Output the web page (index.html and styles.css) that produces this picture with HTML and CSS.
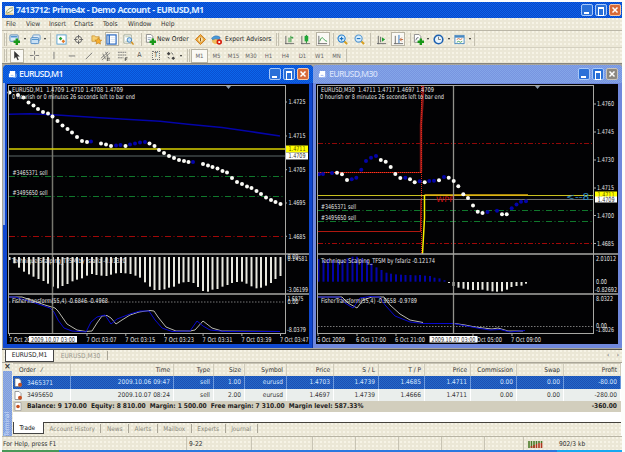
FILE: index.html
```html
<!DOCTYPE html>
<html lang="en">
<head>
<meta charset="utf-8">
<title>7413712: Prime4x - Demo Account - EURUSD,M1</title>
<link rel="stylesheet" href="styles.css">
</head>
<body>
<div class="app">
  <header class="titlebar">
    <svg class="logo" viewBox="0 0 10 10"><rect width="10" height="10" rx="1" fill="#f4f2e4"/><path d="M1 8Q3 2 9 2M2 8Q6 7 9 4" fill="none" stroke="#8a9a60"/><path d="M1 9h8" stroke="#d8a030"/></svg>
    <span class="title">7413712: Prime4x - Demo Account - EURUSD,M1</span>
    <div class="winbtns"><i class="wb min"></i><i class="wb max"></i><i class="wb close"><svg viewBox="0 0 12 12"><path d="M3 3l6 6M9 3l-6 6"/></svg></i></div>
  </header>
  <nav class="menu"><span>File</span><span>View</span><span>Insert</span><span>Charts</span><span>Tools</span><span>Window</span><span>Help</span></nav>

  <div class="toolbar tb1">
    <i class="grip"></i>
    <svg class="ic" viewBox="0 0 12 12"><rect x="1" y="1" width="9" height="7" rx="1" fill="#dceaf6" stroke="#5a8ab8"/><path d="M2 3h7" stroke="#4a90d0" stroke-width="1.5"/><path d="M8.5 5v7M5 8.5h7" stroke="#189818" stroke-width="2.6"/></svg>
    <i class="caret"></i>
    <svg class="ic" viewBox="0 0 12 12"><rect x="3" y="1" width="8" height="6" rx="1" fill="#e4eef8" stroke="#6a9ac8"/><rect x="1" y="4" width="8.500" height="6.500" rx="1" fill="#c8e0f4" stroke="#4a86c0"/><path d="M2 6h7" stroke="#4a90d0"/></svg>
    <i class="caret"></i>
    <i class="sep"></i>
    <svg class="ic" viewBox="0 0 12 12"><rect x="1" y="1" width="10" height="10" fill="#fff" stroke="#58a0d0"/><path d="M3 5l2-2 2 2-2 2z" fill="#28a030"/><path d="M6 8l2-2 2 2-2 2z" fill="#e07828"/></svg>
    <svg class="ic" viewBox="0 0 12 12"><circle cx="6" cy="6" r="3.500" fill="none" stroke="#666"/><path d="M6 1v4M6 7v4M1 6h4M7 6h4" stroke="#666"/></svg>
    <svg class="ic" viewBox="0 0 12 12"><path d="M1 2h3l1 1h4v5H1z" fill="#f8d070" stroke="#c89030" stroke-width=".8"/><path d="M8 4l1.200 2.400 2.600.3-1.900 1.800.5 2.600L8 9.800 5.600 11.100l.5-2.600-1.900-1.800 2.600-.3z" fill="#f8b030" stroke="#b87818" stroke-width=".6"/></svg>
    <span class="pressed"><svg class="ic" viewBox="0 0 12 12"><rect x="1" y="1" width="10" height="10" fill="#fff" stroke="#2868c0" stroke-width="1.300"/><path d="M3.500 1v10" stroke="#2868c0" stroke-width="1.500"/><path d="M5 4h5M5 6h5M5 8h5" stroke="#c8d8ec" stroke-width=".7"/></svg></span>
    <svg class="ic" viewBox="0 0 12 12"><path d="M1 1h8v9H1z" fill="#fff" stroke="#a0a898"/><path d="M2.500 3h5M2.500 8h3" stroke="#b8c8a8"/><circle cx="7" cy="6.500" r="2.500" fill="#c8e4f8" stroke="#3c80c0"/><path d="M9 8.500l2.500 3" stroke="#d09020" stroke-width="1.600"/></svg>
    <i class="sep"></i>
    <svg class="ic" viewBox="0 0 12 12"><path d="M1.500.5h5l2 2V9h-7z" fill="#fff" stroke="#888"/><path d="M3 4h4M3 6h3" stroke="#9ab"/><path d="M8.500 5v7M5 8.500h7" stroke="#189818" stroke-width="2.600"/></svg>
    <span class="lbl order">New Order</span>
    <svg class="ic" viewBox="0 0 12 12"><path d="M6 .5L11.500 6 6 11.500.5 6z" fill="#f8b040" stroke="#c87818"/><circle cx="6" cy="6" r="3" fill="#fce8b0" stroke="#c88020" stroke-width=".6"/><path d="M6 4v4" stroke="#885010"/></svg>
    <svg class="ic" viewBox="0 0 12 12"><ellipse cx="5.500" cy="7" rx="4.500" ry="3.800" fill="#f0c060"/><path d="M.5 4.500Q5 0 10 3.500L9 6.500Q5 4 2 6.500z" fill="#4898d8" stroke="#2868a8" stroke-width=".5"/><circle cx="9" cy="8.800" r="3" fill="#d82010"/><rect x="8" y="7.800" width="2" height="2" fill="#fff"/></svg>
    <span class="lbl expert">Expert Advisors</span>
    <i class="grip"></i>
    <svg class="ic" viewBox="0 0 12 12"><path d="M2 2v9M1 10.500h10" stroke="#666"/><path d="M5.500 4v5M7.500 2v7M7.500 4h2M9.500 3v2" stroke="#289838"/></svg>
    <svg class="ic" viewBox="0 0 12 12"><path d="M2 2v9M1 10.500h10" stroke="#666"/><path d="M7 1v9" stroke="#188828"/><rect x="5" y="2" width="4" height="6" fill="#20a838"/></svg>
    <span class="pressed"><svg class="ic" viewBox="0 0 12 12"><path d="M2 2v9M1 10.500h10" stroke="#666"/><path d="M3 8Q5 2 7 5t4 3" fill="none" stroke="#38a048"/></svg></span>
    <i class="sep"></i>
    <svg class="ic" viewBox="0 0 12 12"><path d="M7.500 7.500l3.500 3.500" stroke="#d8a020" stroke-width="2.200"/><circle cx="5" cy="5" r="3.900" fill="#d8eefc" stroke="#2880d0" stroke-width="1.200"/><path d="M3 5h4M5 3v4" stroke="#1870c0" stroke-width="1.200"/></svg>
    <svg class="ic" viewBox="0 0 12 12"><path d="M7.500 7.500l3.500 3.500" stroke="#d8a020" stroke-width="2.200"/><circle cx="5" cy="5" r="3.900" fill="#d8eefc" stroke="#5898d0" stroke-width="1.200"/><path d="M3 5h4" stroke="#1870c0" stroke-width="1.200"/></svg>
    <i class="sep"></i>
    <svg class="ic" viewBox="0 0 12 12"><path d="M2.500 2v9M1 10.500h10M5 3v6" stroke="#666"/><path d="M6.500 3.500L10 6 6.500 8.500z" fill="#20a030"/></svg>
    <span class="pressed"><svg class="ic" viewBox="0 0 12 12"><path d="M2.500 2v9M1 10.500h10" stroke="#666"/><path d="M6.500 1v9" stroke="#2870c0"/><path d="M11 6H8M9.500 4L7.500 6l2 2" fill="none" stroke="#c06030"/></svg></span>
    <i class="sep"></i>
    <svg class="ic" viewBox="0 0 12 12"><path d="M1.500.5h5l2 2V9h-7z" fill="#fff" stroke="#888"/><path d="M3 7q1-4 3-3" fill="none" stroke="#667"/><path d="M8.500 5v7M5 8.500h7" stroke="#189818" stroke-width="2.600"/></svg>
    <i class="caret"></i>
    <svg class="ic" viewBox="0 0 12 12"><circle cx="6" cy="6" r="4.700" fill="#e8f4fc" stroke="#1c60b0" stroke-width="1.700"/><path d="M6 3v3h2.500" fill="none" stroke="#555" stroke-width=".8"/></svg>
    <i class="caret"></i>
    <svg class="ic" viewBox="0 0 12 12"><rect x="1" y="1.500" width="10" height="9" fill="#fff" stroke="#4888c0"/><path d="M1 3h10" stroke="#4888c0" stroke-width="2"/><path d="M3 6l2-1 2 1 2-1" fill="none" stroke="#d07040"/><path d="M3 9l2-1 2 1 2-1" fill="none" stroke="#40a050"/></svg>
    <i class="caret"></i>
    <i class="sep"></i>
  </div>

  <div class="toolbar tb2">
    <i class="grip"></i>
    <span class="pressed"><svg class="ic" viewBox="0 0 12 12"><path d="M3.500 1v8.500l2-2 1.700 3.700 1.300-.6-1.600-3.600h2.800z" fill="#333"/></svg></span>
    <svg class="ic" viewBox="0 0 12 12"><path d="M6 1v4M6 7v4M1 6h4M7 6h4" stroke="#777"/></svg>
    <svg class="ic" viewBox="0 0 12 12"><path d="M6.500 2v8" stroke="#777"/></svg>
    <svg class="ic" viewBox="0 0 12 12"><path d="M3 6.500h7" stroke="#777"/></svg>
    <svg class="ic" viewBox="0 0 12 12"><path d="M3 10l7-7" stroke="#777"/></svg>
    <svg class="ic" viewBox="0 0 12 12"><path d="M1 9l8-7M2 11l9-8M3 4l3 6M6 2l3 6" stroke="#666" stroke-width=".8"/><path d="M8 9h3M8 11h3M8 8v4" stroke="#333" stroke-width=".7"/></svg>
    <svg class="ic" viewBox="0 0 12 12"><path d="M1 2.500h9M1 5.500h9M1 8.500h6" stroke="#777" stroke-dasharray="2 .5"/><path d="M9 12V8.500h2.500M9 10h2" fill="none" stroke="#333" stroke-width=".8"/></svg>
    <span class="glyph">A</span>
    <span class="glyph boxed">T</span>
    <svg class="ic" viewBox="0 0 12 12"><path d="M2 4l2-2 2 2-2 2zM7 9l2-2 2 2-2 2z" fill="#444"/><path d="M7 3l2 2M3 8l2 1" stroke="#444"/></svg>
    <i class="caret"></i>
    <i class="grip"></i>
    <span class="pressed tf">M1</span><span class="tf">M5</span><span class="tf">M15</span><span class="tf">M30</span><span class="tf">H1</span><span class="tf">H4</span><span class="tf">D1</span><span class="tf">W1</span><span class="tf">MN</span>
    <i class="sep"></i>
  </div>

  <main class="mdi">
    <section class="win active">
      <div class="wtitle"><svg class="wlogo" viewBox="0 0 10 10"><path d="M2 1h6v3H2zM1 4h7v4H1z" fill="#fff"/><path d="M3 6h3M6 8h3V4" fill="none" stroke="#9cc4f4"/></svg><span>EURUSD,M1</span>
        <div class="winbtns"><i class="wb min"></i><i class="wb max"></i><i class="wb close"><svg viewBox="0 0 12 12"><path d="M3 3l6 6M9 3l-6 6"/></svg></i></div></div>
      <svg class="chart" id="m1" viewBox="7 84 302 260"></svg>
    </section>
    <section class="win idle">
      <div class="wtitle"><svg class="wlogo" viewBox="0 0 10 10"><path d="M2 1h6v3H2zM1 4h7v4H1z" fill="#fff"/><path d="M3 6h3M6 8h3V4" fill="none" stroke="#9cb4f0"/></svg><span>EURUSD,M30</span>
        <div class="winbtns"><i class="wb min"></i><i class="wb max"></i><i class="wb close"><svg viewBox="0 0 12 12"><path d="M3 3l6 6M9 3l-6 6"/></svg></i></div></div>
      <svg class="chart" id="m30" viewBox="316 84 302 260"></svg>
    </section>
  </main>

  <div class="charttabs"><span class="on">EURUSD,M1</span><span class="off">EURUSD,M30</span><span class="arrows"><b>‹</b><b>›</b></span></div>

  <section class="terminal">
    <aside><b>×</b><div><span>Terminal</span></div></aside>
    <div class="panel">
      <div class="row head"><span class="l">Order &nbsp; ⁄</span><span>Time</span><span>Type</span><span>Size</span><span>Symbol</span><span>Price</span><span>S / L</span><span>T / P</span><span>Price</span><span>Commission</span><span>Swap</span><span>Profit</span></div>
      <div class="row sel"><span class="l"><svg viewBox="0 0 8 9"><path d="M1 .5h4l2 2v6H1z" fill="#fff" stroke="#777" stroke-width=".7"/><circle cx="6" cy="6.800" r="2" fill="#c85020"/></svg>3465371</span><span>2009.10.06 09:47</span><span>sell</span><span>1.00</span><span>eurusd</span><span>1.4703</span><span>1.4739</span><span>1.4685</span><span>1.4711</span><span>0.00</span><span>0.00</span><span>-80.00</span></div>
      <div class="row alt"><span class="l"><svg viewBox="0 0 8 9"><path d="M1 .5h4l2 2v6H1z" fill="#fff" stroke="#777" stroke-width=".7"/><circle cx="6" cy="6.800" r="2" fill="#c85020"/></svg>3495650</span><span>2009.10.07 08:24</span><span>sell</span><span>2.00</span><span>eurusd</span><span>1.4697</span><span>1.4739</span><span>1.4666</span><span>1.4711</span><span>0.00</span><span>0.00</span><span>-280.00</span></div>
      <div class="balance"><svg viewBox="0 0 8 9"><path d="M1 .5h6v8H1z" fill="#fff" stroke="#999" stroke-width=".7"/><circle cx="4" cy="4.500" r="1.800" fill="#c85020"/></svg><span>Balance: 9 170.00&nbsp; Equity: 8 810.00&nbsp; Margin: 1 500.00&nbsp; Free margin: 7 310.00&nbsp; Margin level: 587.33%</span><span class="total">-360.00</span></div>
      <div class="blank"></div>
      <div class="tabs"><span class="on">Trade</span><span>Account History</span><span>News</span><span>Alerts</span><span>Mailbox</span><span>Experts</span><span>Journal</span></div>
    </div>
  </section>

  <footer class="status"><span>For Help, press F1</span><span>9-22</span><span></span><span></span><span></span><span></span><span></span><span></span><span class="net"><svg viewBox="0 0 15 7"><path d="M1 0v7M3.500 0v7M6 0v7M8.500 0v3M11 0v2M13.500 0v2" stroke="#4a7a28" stroke-width="1.600"/><path d="M3.500 5v2M6 4v3M8.500 3v4M11 2v5M13.500 2v5" stroke="#b03820" stroke-width="1.600"/></svg>902/3 kb</span></footer>
  <div class="taskbar"><i></i><b></b></div>
</div>
<script src="charts.js"></script>
</body>
</html>
```
FILE: styles.css
```css
* { box-sizing: border-box; }
body { margin: 0; width: 625px; height: 452px; background: #fdfdfb; overflow: hidden; font: 6.6px/1 "DejaVu Sans Condensed", "DejaVu Sans", sans-serif; color: #333; }
.app { margin: 0 3px 0 2px; padding-top: 2px; height: 452px; display: flex; flex-direction: column; }
.app > * { flex: none; }
i, b { font-style: normal; }
svg { display: block; }

.titlebar { height: 16px; display: flex; align-items: center; padding: 0 1px 0 3px; background: conic-gradient(#0a48c8 25%, #0c62ea 0 50%, #0a48c8 0 75%, #0c62ea 0) 0 0/2px 2px; }
.logo { width: 9px; height: 9px; }
.title { margin-left: 2px; font: bold 9px/16px "Open Sans", sans-serif; color: #dcecff; white-space: nowrap; width: 190px; letter-spacing: -.6px; word-spacing: .4px; }
.winbtns { margin-left: auto; display: flex; gap: 2px; }
.wb { width: 12px; height: 12px; border: 1px solid #a8c8f8; border-radius: 2px; background: #2a70d8; display: flex; }
.wb.min::after { content: ""; width: 5px; height: 2px; margin: 7px 0 0 2px; background: #fff; }
.wb.max::after { content: ""; width: 6px; height: 6px; margin: 2px; border: 1px solid #fff; border-top-width: 2px; }
.wb.close { background: #d86a38; border-color: #f4c8a8; }
.wb svg { width: 10px; height: 10px; stroke: #fff; stroke-width: 1.8; fill: none; }

.menu, .toolbar, .charttabs, .panel .head, .tabs, .status, aside { background-color: #ebe7d6; background-image: conic-gradient(#f6f3e6 25%, transparent 0); background-size: 4px 4px; }
.menu { height: 13px; padding: 1px 0 0 4px; display: grid; grid-template-columns: 20px 23px 25px 29px 25px 33px 20px; align-items: center; border-bottom: 1px solid #bbb7a8; }
.toolbar { display: grid; align-items: center; justify-items: center; }
.tb1 { height: 17px; grid-template-columns: 6px 13px 7px 14px 5px 7px 14px 20px 16px 15px 19px 6px 12px 36px 16px 17px 49px 7px 16px 17px 17px 4px 15px 18px 5px 16px 18px 6px 11px 7px 14px 7px 15px 5px 4px; border-bottom: 1px solid #d4d0c0; }
.tb2 { height: 16px; grid-template-columns: 7px 15px 20px 18px 18px 17px 17px 17px 17px 16px 13px 8px 6px 17px 17px 17px 18px 17px 17px 17px 17px 17px 2px; border-bottom: 1px solid #88867e; }
.ic { width: 11px; height: 11px; }
.caret { border: 1.5px solid transparent; border-top: 2px solid #222; border-bottom: 0; }
.grip { width: 3px; height: 13px; border-left: 1px solid #c4c0b0; border-right: 1px solid #c4c0b0; }
.sep { width: 1px; height: 13px; background: #c4c0b0; }
.pressed { width: 14px; height: 14px; display: flex; align-items: center; justify-content: center; background: #faf9f4; border: 1px solid #b8b4a4; }
.tf { font-size: 6px; color: #666; }
.pressed.tf { width: 17px; }
.lbl { white-space: nowrap; justify-self: start; color: #222; }
.order { margin-left: 1px; }
.glyph { font-size: 7px; color: #555; }
.boxed { border: 1px dotted #777; padding: 0 1px; }

.mdi { height: 285px; padding: 1px 0 1px 1px; display: flex; background: #a8a69c; }
.win { width: 310px; height: 283px; padding: 0 4px 4px; border-radius: 4px 4px 0 0; }
.win.active { background: linear-gradient(#9cb4e4, #9cb4e4) 0 0/2px 160px no-repeat #1048d0; box-shadow: inset -1px 0 #0830a0; }
.win.idle { width: 309px; padding-left: 3px; background: #7088dc; }
.wtitle { height: 18px; display: flex; align-items: center; margin: 0 -4px 1px; padding: 0 4px 0 5px; border-radius: 4px 4px 0 0; }
.active .wtitle { background: conic-gradient(#0a50d0 25%, #0c66ec 0 50%, #0a50d0 0 75%, #0c66ec 0) 0 0/2px 2px; color: #e8f2ff; }
.idle .wtitle { background: conic-gradient(#7894e0 25%, #84a6e8 0 50%, #7894e0 0 75%, #84a6e8 0) 0 0/2px 2px; color: #d0ddf8; margin-left: -3px; }
.wtitle span { margin-left: 2px; font: 600 8.8px/18px "Open Sans", sans-serif; letter-spacing: -.75px; }
.wlogo { width: 9px; height: 9px; }
.idle .wb.close { background: #8c8880; border-color: #c8c4bc; }
.chart { width: 302px; height: 260px; background: #020204; font: 6.6px "DejaVu Sans Condensed", sans-serif; }

.charttabs { height: 13px; border-top: 1px solid #55534c; display: flex; line-height: 11px; }
.charttabs .on { width: 49px; margin-left: 3px; height: 12px; background: #fff; border: 1px solid #444; border-top: 0; text-align: center; font-size: 6.6px; color: #222; }
.charttabs .off { width: 54px; color: #99978c; text-align: center; font-size: 6.6px; border-right: 1px solid #aaa698; height: 9px; margin-top: 1px; line-height: 10px; }
.arrows { margin-left: auto; display: flex; gap: 7px; padding-right: 3px; color: #888; font-weight: 400; }

.terminal { display: flex; height: 74px; border-top: 1px solid #aaa698; }
aside { width: 11px; padding: 0 1px; display: flex; flex-direction: column; }
aside b { height: 8px; font-size: 9px; line-height: 7px; text-align: center; }
aside div { flex: 1; background: conic-gradient(#7e9cdc 25%, #92aee4 0 50%, #7e9cdc 0 75%, #92aee4 0) 0 0/2px 2px; display: flex; align-items: flex-end; justify-content: center; }
aside div span { writing-mode: vertical-rl; transform: rotate(180deg); color: #d4e0fa; font-size: 6.4px; }
.panel { width: 608px; background: #fff; }
.row { display: grid; grid-template-columns: 58px 103px 40px 31px 42px 47px 45px 46px 46px 46px 47px 57px; height: 12px; text-align: right; white-space: nowrap; font-size: 6.5px; }
.row span { line-height: 12px; padding-right: 3px; }
.row .l { text-align: left; display: flex; align-items: center; gap: 5px; padding-left: 1px; }
.row svg, .balance svg { width: 8px; height: 9px; flex: none; }
.head { height: 13px; border-top: 1px solid #c8c4b4; }
.head .l { padding-left: 6px; }
.head span, .sel span { border-right: 1px solid #d0ccbc; }
.sel { height: 13px; color: #d4e6ff; background: conic-gradient(#1c50b4 25%, #2668c8 0 50%, #1c50b4 0 75%, #2668c8 0) 0 0/2px 2px; }
.sel span { border-color: #6c98dc; }
.alt { height: 12px; background: #eaeeec; }
.alt span { border-right: 1px solid #fff; }
.balance { height: 11px; display: flex; align-items: center; padding: 0 4px 0 1px; background: #d2cebd; font-weight: bold; font-size: 6.6px; color: #222; gap: 5px; white-space: nowrap; }
.total { margin-left: auto; }
.blank { height: 11px; border-bottom: 1px solid #44423c; }
.tabs { height: 14px; display: flex; color: #8a887c; line-height: 12px; font-size: 6.4px; }
.tabs span { height: 9px; line-height: 10px; margin-top: 1px; padding: 0 5.5px; border-right: 1px solid #aaa698; white-space: nowrap; }
.tabs .on { height: 12px; width: 31px; margin: -1px 0 0; background: #fff; color: #222; border: 1px solid #444; border-top: 0; line-height: 12px; }

.status { height: 14px; border-top: 1px solid #b8b4a4; display: grid; grid-template-columns: 185px 65px 61px 43px 43px 43px 43px 39px 1fr; line-height: 14px; }
.status span { padding-left: 2px; border-right: 1px solid #c8c4b4; white-space: nowrap; }
.status span:first-child { padding-left: 1px; }
.status .net { display: flex; gap: 16px; align-items: center; border: 0; padding-left: 4px; }
.net svg { width: 15px; height: 7px; }
.taskbar { height: 3px; background: #2a78e0; display: flex; }
.taskbar i { width: 57px; background: #489858; }
.taskbar b { margin-left: auto; width: 65px; background: #18a8f0; }
```
FILE: charts.js
```js
const NS = 'http://www.w3.org/2000/svg';

function painter(svg) {
  const add = (tag, attrs, text) => {
    const el = document.createElementNS(NS, tag);
    for (const k in attrs) el.setAttribute(k, attrs[k]);
    if (text) el.textContent = text;
    svg.appendChild(el);
  };
  return {
    add,
    h: (x1, x2, y, stroke, w = 1, dash = '') => add('path', { d: `M${x1} ${y}H${x2}`, stroke, 'stroke-width': w, 'stroke-dasharray': dash }),
    v: (x, y1, y2, stroke, w = 1, dash = '') => add('path', { d: `M${x} ${y1}V${y2}`, stroke, 'stroke-width': w, 'stroke-dasharray': dash }),
    line: (points, stroke, w = 1, dash = '') => add('polyline', { points, fill: 'none', stroke, 'stroke-width': w, 'stroke-dasharray': dash }),
    box: (x, y, width, height, fill) => add('rect', { x, y, width, height, fill }),
    // cy is the vertical middle of the digits
    text: (s, x, cy, w, fill = '#e4e4e4', size = 6.6) => add('text', { x, y: cy + size * 0.37, fill, 'font-size': size, textLength: w, lengthAdjust: 'spacingAndGlyphs', style: 'white-space:pre' }, s),
    dots: (list, fill) => list.trim().split(' ').forEach(p => {
      const [cx, cy] = p.split(',');
      add('circle', { cx, cy, r: 2, fill });
    }),
    bars: (x0, step, base, ends, fill, w) => ends.forEach((e, i) => {
      const x = Math.round((x0 + i * step) * 2) / 2 - w / 2;
      add('rect', { x, y: Math.min(base, e), width: w, height: Math.abs(e - base), fill });
    })
  };
}

const BLUE = '#0404a8', WHITE = '#fbfbf6', FRAME = '#a8a8a4';
const px = a => a.map(v => 205 + v / 3);

function frame(p, l, r, end) {
  p.h(l, r, 85.5, FRAME);
  p.v(l + .5, 85, 333, FRAME);
  p.v(r + .5, 85, 334, FRAME);
  p.h(l, end, 254, FRAME, 1.6);
  p.h(l, end, 294, FRAME, 1.6);
  p.h(l, r, 333.5, FRAME);
}

{
  const p = painter(document.getElementById('m1'));
  p.bars(9.5, 4.839, 257, px([165,175,188,200,208,215,222,228,236,245,250,243,237,229,224,220,212,207,210,212,213,209,205,204,205,207,212,218,232,245,255,255,253,248,245,236,232,231,234,246,258,260,254,252,245,240,234,231,230,236,244,250,248,242,234,222,213]), '#e8e8e0', 2);
  p.h(9, 285, 302, '#777', 1, '1.500 1.500');
  p.line('9,297 22,297 45,305 55,308 58,311 67,324 77,330 86,331.5 92,331 97,323 102,316 107,315.5 111,318 116,324 122,320 130,315 139,312 150,310.500 154,311 158,317 166,327 176,331 190,331 195,330 203,321 212,328 222,331 280,331.5', '#b8b8b0');
  p.line('9,297 15,297 35,303 50,308 54,312 58,320 64,328 72,331 86,332 91,322 97,317 105,315 111,324 117,319 130,314 140,311 149,311 155,320 162,328 172,331.5 190,331 197,321 203,326 210,330 225,331.5 280,331.5', '#0808d0');
  p.line('9,114.3 30,113.700 53,114.700 100,117.700 160,121.300 188,124.300 222,127.500 250,131.500 280,136', BLUE, 1.6);
  p.h(9, 285, 156, '#5c6868');
  p.h(9, 285, 176.5, '#10782c', 1, '6 2.500 1 2.500');
  p.h(9, 285, 196.5, '#10782c', 1, '6 2.500 1 2.500');
  p.h(9, 285, 236.5, '#a00808', 1, '6 2.500 1 2.500');
  p.v(52.5, 86, 333, '#77776f', 1.5);
  p.h(9, 287, 149, '#d8d000', 1.5);
  p.dots('9.5,92.5 18,95 23.5,97.5 28.5,102.5 33.5,105.5 38,109 43,112 48,113.5 52.5,116.5 57.5,121 62.5,125.5 67.5,129 72,132.5 77,137 82,141 87,142 101,143.5 106,144.5 111,146 125.5,146 149.5,143.5 154.500,146 159,150 164,153 169,156 174,158 179,160 184,161 188.5,162 203,164 208,165.5 212.5,167 217.5,168.5 222.5,171 227,172.5 232,178 237,182 242,184 247,186.5 251.5,188 256.5,191 261,194 266,197.5 271,200 275.5,202 280.5,204', WHITE);
  p.dots('91,141.5 116,145.5 120.5,145 130,144.5 135,143.5 140,142.5 145,142 193,162', BLUE);
  frame(p, 8, 285, 309);
  p.add('path', { d: 'M226 86h5l-2.500 3z', fill: '#8898a8' });
  p.text('EURUSD,M1  1.4709 1.4710 1.4708 1.4709', 12, 90, 111);
  p.text('0 hourish or 0 minutes 26 seconds left to bar end', 12, 96.3, 123);
  p.text('#3465371 sell', 12.5, 173, 35);
  p.text('#3495650 sell', 12.5, 193, 35);
  p.text('Technique Scalping_TFSM by fsfariz -0.01320', 12, 261, 114);
  p.text('FisherTransform(55,4) -0.6846 -0.4968', 12, 301, 96);
  [['1.4725', 102], ['1.4715', 136], ['1.4705', 169.7], ['1.4695', 203], ['1.4685', 236.3]].forEach(([s, y]) => {
    p.text(s, 288.5, y, 17); p.h(285, 287, y, FRAME);
  });
  p.box(286, 145.5, 22, 7, '#ffff00'); p.text('1.4711', 288.5, 149, 17, '#5a5200');
  p.box(286, 152.5, 22, 7, '#fff'); p.text('1.4709', 288.5, 156, 17, '#333');
  p.text('0.00', 287.5, 257, 11); p.text('0.14581', 287.5, 259, 20);
  p.text('-3.06199', 287, 290, 21);
  p.text('1.6875', 287.5, 299, 16); p.text('0.00', 287.5, 301.5, 11);
  p.text('-8.0379', 287, 329.3, 19);
  [['7 Oct 2009', 9, 28], ['7 Oct 03:07', 86.5, 30], ['7 Oct 03:15', 125.3, 30], ['7 Oct 03:23', 164, 30], ['7 Oct 03:31', 202.6, 30], ['7 Oct 03:39', 241.4, 30], ['7 Oct 03:47', 280, 28.5]].forEach(([s, x, w]) => {
    p.text(s, x, 339.2, w); p.v(x + .5, 334, 336, FRAME);
  });
  p.box(29, 336, 48, 6.5, '#fff'); p.text('2009.10.07 03:00', 31, 339.3, 44, '#333');
}

{
  const p = painter(document.getElementById('m30'));
  p.bars(318.5, 4.84, 281.7, px([162,165,163,165,165,165,160,155,155,160,165,175,187,195,203,206,208,209,210,210,211,210,212,213,218,220,226]), BLUE, 2);
  p.bars(448.8, 4.84, 282, px([234,243,248,251,254,255,255,254,257,259,260,259,254,246,243,242,236]), '#e8e8e0', 2);
  p.h(318, 594, 326.5, '#777', 1, '1.500 1.500');
  p.line('318,297 342,297 348,303 357,308 363,300 372,297 384,297 390,305 400,314 410,320 423,322.5', '#b8b8b0');
  p.line('455,323.500 465,325 475,327 492,329 498,328 508,331 523,331', '#b8b8b0');
  p.line('318,297 340,297 345,303 353,308 360,298 370,296.5 380,297 385,305 395,316 410,322 423,323.5 453,323.5 480,328.5 490,330 500,329.5 510,332 525,330.5', '#0808d0');
  p.h(318, 594, 143.5, '#900808', 1, '5 2 1 2 2 2');
  p.h(318, 594, 199.5, '#70706c');
  p.h(318, 594, 210.5, '#10782c', 1, '6 2.500 1 2.500');
  p.h(318, 594, 221.5, '#10782c', 1, '6 2.500 1 2.500');
  p.h(318, 594, 243.5, '#a00808', 1, '5 2 1 2 2 2');
  p.h(318, 594, 195.5, '#c8c020');
  p.line('424.5,195 528,195', '#e0b010', 1.5);
  p.line('422.5,254 424.5,218 424.5,195', '#f8f000', 1.5);
  p.line('421,172.500 421,125 423,94 423,86', '#8c1818', 2.4);
  p.line('318,172.500 421,172.500', '#8c1010', 1);
  p.line('318,172.500 421,172.500', '#ff3818', 1, '1 1');
  p.line('421.500,86 421.500,254', '#e02818', 1, '1 1');
  p.line('318,231.500 420.5,231.500 421,200', '#b01810', 1.2);
  p.v(453.5, 86, 333, '#92928c', 1.3);
  p.dots('337,172.7 342,174.3 347,180 380.8,160 385.7,161.700 390.7,167 395.3,174 400.3,178 410,179.3 414.7,182.3 424.7,182.3 439,180.3 448.7,177.7 453.7,181 458.3,186.3 463.3,194.3 468,198 473,205.5 477.7,211.7 482.5,213 502,214.3 506.7,214.3', WHITE);
  p.dots('319,174.3 323,174 332,173 351.7,179.300 356.3,177.7 361.3,169.700 366,161 371,157.700 376,156 405.3,177.7 419.7,181.3 429.3,181 434,180.7 444,177 487.5,212 497,210.7 511.7,208.3 516.5,204.5 521,201.7 526,201.3', BLUE);
  frame(p, 317, 593, 618);
  p.add('path', { d: 'M535 86h5l-2.500 3z', fill: '#8898a8' });
  p.text('EURUSD,M30  1.4711 1.4717 1.4697 1.4709', 321, 90, 113);
  p.text('0 hourish or 8 minutes 26 seconds left to bar end', 320, 96.3, 124);
  p.text('#3465371 sell', 321, 207, 35);
  p.text('#3495650 sell', 321, 218, 35);
  p.text('WPF', 436, 199.700, 18, '#d01010', 7.5);
  p.text('<--8:', 566, 196.500, 27, '#3090c8', 9);
  p.text('Technique Scalping_TFSM by fsfariz -0.12174', 321, 261, 114);
  p.text('FisherTransform(55,4) -0.9558 -0.9789', 321, 301, 96);
  [['1.4760', 104], ['1.4745', 132], ['1.4730', 160], ['1.4715', 188], ['1.4700', 215.5], ['1.4685', 243.5]].forEach(([s, y]) => {
    p.text(s, 597, y, 17); p.h(593, 596, y, FRAME);
  });
  p.box(595, 191.5, 22, 6, '#ffff00'); p.text('1.4711', 597.5, 194.5, 17, '#5a5200');
  p.box(595, 196.5, 22, 6, '#fff'); p.text('1.4709', 597.5, 199.5, 17, '#333');
  p.text('2.01012', 596, 259, 20); p.text('0.00', 596, 281.5, 11); p.text('-0.82692', 595, 289.5, 22);
  p.text('8.0322', 596, 299, 17); p.text('0.00', 596, 325.5, 11); p.text('-1.8026', 596, 329.5, 18);
  [['6 Oct 2009', 317, 28], ['6 Oct 17:00', 356, 30], ['6 Oct 21:00', 395, 30], ['7 Oct 05:00', 472, 30], ['7 Oct 09:00', 511, 30]].forEach(([s, x, w]) => {
    p.text(s, x, 339.2, w); p.v(x + 1, 334, 336, FRAME);
  });
  p.box(429.5, 336, 48, 6.5, '#fff'); p.text('2009.10.07 03:00', 431.5, 339.3, 44, '#333');
}
```
